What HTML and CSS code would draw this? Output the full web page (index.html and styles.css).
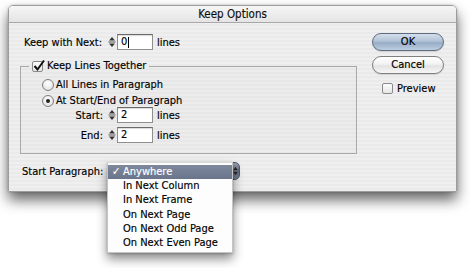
FILE: index.html
```html
<!DOCTYPE html>
<html>
<head>
<meta charset="utf-8">
<title>Keep Options</title>
<link rel="stylesheet" href="styles.css">
</head>
<body>
<div class="stage">
  <div class="window">
    <div class="titlebar">Keep Options</div>
    <div class="content">
      <div class="left">
        <div class="field first">
          <span class="label">Keep with Next:</span>
          <span class="spinner"><svg width="10" height="16" viewBox="0 0 10 16"><path d="M2 6.5 L5 3 L8 6.5 Z" fill="#333"/><rect x="1.5" y="7.5" width="7" height="1" fill="#555"/><path d="M2 9.5 L5 13 L8 9.5 Z" fill="#333"/></svg></span>
          <span class="input">0<span class="caret"></span></span>
          <span class="unit">lines</span>
        </div>
        <fieldset class="group">
          <legend class="legend"><span class="checkbox"><svg width="14" height="14" viewBox="0 0 14 14"><path d="M2.5 7 L5.5 10.5 L12 1.5" fill="none" stroke="#111" stroke-width="2"/></svg></span>Keep Lines Together</legend>
          <div class="radio-row r1"><span class="radio"></span>All Lines in Paragraph</div>
          <div class="radio-row r2"><span class="radio on"></span>At Start/End of Paragraph</div>
          <div class="field sub">
            <span class="label">Start:</span>
            <span class="spinner"><svg width="10" height="16" viewBox="0 0 10 16"><path d="M2 6.5 L5 3 L8 6.5 Z" fill="#333"/><rect x="1.5" y="7.5" width="7" height="1" fill="#555"/><path d="M2 9.5 L5 13 L8 9.5 Z" fill="#333"/></svg></span>
            <span class="input">2</span>
            <span class="unit">lines</span>
          </div>
          <div class="field sub end">
            <span class="label">End:</span>
            <span class="spinner"><svg width="10" height="16" viewBox="0 0 10 16"><path d="M2 6.5 L5 3 L8 6.5 Z" fill="#333"/><rect x="1.5" y="7.5" width="7" height="1" fill="#555"/><path d="M2 9.5 L5 13 L8 9.5 Z" fill="#333"/></svg></span>
            <span class="input">2</span>
            <span class="unit">lines</span>
          </div>
        </fieldset>
        <div class="popup-row">
          <span class="label">Start Paragraph:</span>
          <div class="popup">
            <div class="popup-btn"><svg class="arrows" width="5" height="12" viewBox="0 0 5 12"><path d="M0.5 5 L2.5 2 L4.5 5 Z" fill="#222"/><path d="M0.5 7 L2.5 10 L4.5 7 Z" fill="#222"/></svg></div>
            <ul class="menu">
              <li class="item selected"><span class="tick">✓</span>Anywhere</li>
              <li class="item">In Next Column</li>
              <li class="item">In Next Frame</li>
              <li class="item">On Next Page</li>
              <li class="item">On Next Odd Page</li>
              <li class="item">On Next Even Page</li>
            </ul>
          </div>
        </div>
      </div>
      <div class="right">
        <div class="btn default">OK</div>
        <div class="btn">Cancel</div>
        <div class="preview"><span class="checkbox small"></span>Preview</div>
      </div>
    </div>
  </div>
</div>
</body>
</html>
```
FILE: styles.css
```css
* { box-sizing: border-box; }
html, body { margin: 0; padding: 0; background: #fff; }
html, body { height: 100%; }
body {
  font-family: "DejaVu Sans Condensed", "DejaVu Sans", sans-serif;
  font-stretch: condensed;
  font-size: 11px;
  color: #000;
  -webkit-text-stroke: 0.15px #000;
}
.stage { padding: 5px 0 0 8px; min-height: 268px; }
.window {
  width: 449px;
  height: 187px;
  border: 1px solid #9c9c9c;
  border-radius: 5px 5px 0 0;
  background: repeating-linear-gradient(to bottom, #efefef 0, #efefef 2px, #eaeaea 2px, #eaeaea 4px);
  box-shadow: 0 8px 14px rgba(0,0,0,0.6), 0 0 3px rgba(0,0,0,0.2);
  display: flex;
  flex-direction: column;
}
.titlebar {
  height: 17px;
  border-bottom: 1px solid #a8a8a8;
  border-radius: 4px 4px 0 0;
  background: linear-gradient(to bottom, #f6f6f6, #e4e4e4);
  text-align: center;
  line-height: 16px;
  font-size: 11.5px;
  color: #111;
}
.content {
  flex: 1;
  display: flex;
  padding: 10px 12px 0 11px;
}
.left { width: 337px; padding-top: 1px; }
.right { margin-left: auto; width: 72px; }

.field { display: flex; align-items: center; height: 16px; }
.field .label { width: 83px; margin-right: 4px; }
.field.first .label { padding-left: 4px; }
.spinner { width: 10px; height: 16px; display: block; }
.spinner svg { display: block; }
.input {
  width: 36px;
  height: 16px;
  background: #fff;
  border: 1px solid #8e8e8e;
  border-top-color: #6a6a6a;
  box-shadow: inset 0 1px 1px rgba(0,0,0,0.15);
  padding-left: 3px;
  line-height: 14px;
  display: flex;
  align-items: center;
}
.caret { display: inline-block; width: 1px; height: 11px; background: #000; margin-left: 1px; }
.unit { margin-left: 4px; }

.group {
  margin: 9px 0 0 0;
  padding: 5px 0 10px 0;
  min-width: 0;
  border: 1px solid #a9a9a9;
  background: rgba(0,0,0,0.012);
}
.legend {
  margin-left: 8px;
  padding: 0 3px;
  height: 14px;
  display: flex;
  align-items: center;
  line-height: 14px;
}
.checkbox {
  width: 11px;
  height: 11px;
  border: 1px solid #8a8a8a;
  border-radius: 2px;
  background: linear-gradient(to bottom, #fdfdfd, #e6e6e6);
  margin-right: 4px;
  position: relative;
  display: inline-block;
  flex: none;
}
.checkbox svg { position: absolute; left: -1px; top: -3px; }
.radio-row { display: flex; align-items: center; height: 13px; margin-left: 21px; }
.radio-row.r2 { margin-top: 3px; }
.radio {
  width: 12px;
  height: 12px;
  border-radius: 50%;
  border: 1px solid #7e7e7e;
  background: radial-gradient(circle at 50% 35%, #ffffff, #dcdcdc);
  margin-right: 2px;
  position: relative;
  flex: none;
}
.radio.on::after {
  content: "";
  position: absolute;
  left: 3px; top: 3px;
  width: 4px; height: 4px;
  border-radius: 50%;
  background: #222;
}
.field.sub { margin-left: 21px; }
.field.sub .label { width: 61px; text-align: right; }
.field.end { margin-top: 4px; }

.popup-row { display: flex; align-items: center; height: 18px; margin-top: 8px; }
.popup-row .label { width: 87px; padding-left: 2px; }
.popup { position: relative; width: 133px; height: 18px; }
.popup-btn {
  width: 133px;
  height: 18px;
  border-radius: 5px;
  border: 1px solid #4f5666;
  background: linear-gradient(to bottom, #9aa2b2, #5f687b 50%, #7a8396);
  position: relative;
}
.arrows { position: absolute; right: 1px; top: 2px; }
.menu {
  position: absolute;
  left: 0;
  top: 0;
  width: 126px;
  margin: 0;
  padding: 2px 0 2px;
  list-style: none;
  background: #fdfdfd;
  border: 1px solid #c4c4c4;
  border-top-color: #d8d8d8;
  box-shadow: 0 6px 10px rgba(0,0,0,0.45), 0 1px 2px rgba(0,0,0,0.2);
  z-index: 2;
}
.item {
  height: 14.2px;
  line-height: 14px;
  padding-left: 15px;
  position: relative;
  white-space: nowrap;
}
.item.selected {
  background: linear-gradient(to bottom, #7e889d, #6a748a);
  color: #fff;
  -webkit-text-stroke: 0.15px #fff;
}
.tick { position: absolute; left: 4px; top: 0; font-size: 11px; }

.btn {
  height: 18px;
  border-radius: 9px;
  border: 1px solid #7f7f7f;
  background: linear-gradient(to bottom, #ffffff, #f2f2f2 45%, #e2e2e2 55%, #f7f7f7);
  text-align: center;
  line-height: 16px;
  box-shadow: 0 1px 1px rgba(0,0,0,0.12);
}
.btn + .btn { margin-top: 5px; }
.btn.default {
  border-color: #5d6c82;
  background: linear-gradient(to bottom, #d5dfeb, #b1c2d6 45%, #98adc6 55%, #bccde0);
}
.preview { display: flex; align-items: center; height: 13px; margin-top: 8px; padding-left: 10px; }
.checkbox.small { margin-right: 4px; }
```
